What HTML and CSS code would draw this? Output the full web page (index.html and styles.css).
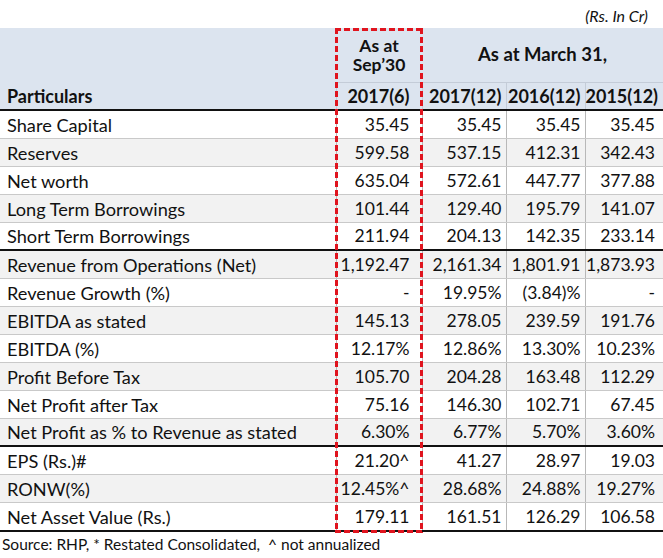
FILE: index.html
```html
<!DOCTYPE html>
<html>
<head>
<meta charset="utf-8">
<link rel="stylesheet" href="styles.css">
</head>
<body>
<div class="page">
  <div class="unit">(Rs. In Cr)</div>
  <div class="tablewrap">
    <table class="fin">
      <colgroup>
        <col class="c1"><col class="c2"><col class="c3"><col class="c4"><col class="c5">
      </colgroup>
      <thead>
        <tr class="h1">
          <th class="part" rowspan="2">Particulars</th>
          <th class="sep"><span class="ln">As at</span><span class="ln">Sep’30</span></th>
          <th class="march" colspan="3">As at March 31,</th>
        </tr>
        <tr class="h2">
          <th class="yr">2017(6)</th>
          <th class="yr">2017(12)</th>
          <th class="yr">2016(12)</th>
          <th class="yr">2015(12)</th>
        </tr>
      </thead>
      <tbody>
        <tr><td>Share Capital</td><td>35.45</td><td>35.45</td><td>35.45</td><td>35.45</td></tr>
        <tr class="alt"><td>Reserves</td><td>599.58</td><td>537.15</td><td>412.31</td><td>342.43</td></tr>
        <tr><td>Net worth</td><td>635.04</td><td>572.61</td><td>447.77</td><td>377.88</td></tr>
        <tr class="alt"><td>Long Term Borrowings</td><td>101.44</td><td>129.40</td><td>195.79</td><td>141.07</td></tr>
        <tr class="grp"><td>Short Term Borrowings</td><td>211.94</td><td>204.13</td><td>142.35</td><td>233.14</td></tr>
        <tr class="alt"><td>Revenue from Operations (Net)</td><td>1,192.47</td><td>2,161.34</td><td>1,801.91</td><td>1,873.93</td></tr>
        <tr><td>Revenue Growth (%)</td><td>-</td><td>19.95%</td><td>(3.84)%</td><td>-</td></tr>
        <tr class="alt"><td>EBITDA as stated</td><td>145.13</td><td>278.05</td><td>239.59</td><td>191.76</td></tr>
        <tr><td>EBITDA (%)</td><td>12.17%</td><td>12.86%</td><td>13.30%</td><td>10.23%</td></tr>
        <tr class="alt"><td>Profit Before Tax</td><td>105.70</td><td>204.28</td><td>163.48</td><td>112.29</td></tr>
        <tr><td>Net Profit after Tax</td><td>75.16</td><td>146.30</td><td>102.71</td><td>67.45</td></tr>
        <tr class="alt grp"><td>Net Profit as % to Revenue as stated</td><td>6.30%</td><td>6.77%</td><td>5.70%</td><td>3.60%</td></tr>
        <tr><td>EPS (Rs.)#</td><td>21.20^</td><td>41.27</td><td>28.97</td><td>19.03</td></tr>
        <tr class="alt"><td>RONW(%)</td><td>12.45%^</td><td>28.68%</td><td>24.88%</td><td>19.27%</td></tr>
        <tr class="last"><td>Net Asset Value (Rs.)</td><td>179.11</td><td>161.51</td><td>126.29</td><td>106.58</td></tr>
      </tbody>
    </table>
    <div class="highlight"></div>
  </div>
  <div class="source">Source: RHP, * Restated Consolidated,&nbsp; ^ not annualized</div>
</div>
</body>
</html>
```

FILE: styles.css
```css
html, body {
  margin: 0;
  padding: 0;
  background: #ffffff;
}

.page {
  width: 663px;
  font-family: "Lato", "Liberation Sans", sans-serif;
  color: #111111;
}

.unit {
  height: 28px;
  box-sizing: border-box;
  padding: 7px 15px 0 0;
  text-align: right;
  font-style: italic;
  font-size: 16px;
  line-height: 18px;
}

.tablewrap {
  position: relative;
}

.fin {
  border-collapse: collapse;
  table-layout: fixed;
  width: 663px;
  font-size: 17.5px;
}

.c1 { width: 336px; }
.c2 { width: 86px; }
.c3 { width: 84px; }
.c4 { width: 79px; }
.c5 { width: 78px; }

.fin th,
.fin td {
  padding: 0;
  white-space: nowrap;
  overflow: visible;
}

.fin thead th {
  background: #dce4ef;
  font-weight: bold;
  font-size: 18px;
  line-height: 20px;
}

.h1 th {
  height: 52px;
}

.h1 .sep {
  text-align: center;
  border-bottom: 1px solid #c4ccd8;
  vertical-align: middle;
  line-height: 17px;
}

.ln {
  display: block;
  height: 19px;
  line-height: 19px;
  font-size: 17.5px;
}

.h1 .march {
  text-align: center;
  vertical-align: middle;
  border-bottom: 1px solid #c4ccd8;
  padding: 0 0 2px 0;
  font-size: 18.5px;
}

.h1 .part {
  text-align: left;
  vertical-align: bottom;
  padding: 0 0 3px 7px;
  border-bottom: 2px solid #111;
}

.h2 th {
  height: 26px;
  border-bottom: 2px solid #111;
}

.h2 .yr {
  text-align: right;
  border-left: 1px solid #c4ccd8;
}

.fin tbody td {
  height: 27px;
  line-height: 20px;
  border-bottom: 1px solid #c9c9c9;
  border-left: 1px solid #b8b8b8;
  text-align: right;
  vertical-align: middle;
}

.fin tbody td:first-child {
  text-align: left;
  padding-left: 7px;
  border-left: none;
  font-size: 18.2px;
}

.h2 .yr:nth-child(1),
.fin tbody td:nth-child(2) { padding-right: 12px; }

.h2 .yr:nth-child(2),
.fin tbody td:nth-child(3) { padding-right: 4px; }

.h2 .yr:nth-child(3),
.fin tbody td:nth-child(4) { padding-right: 4px; }

.h2 .yr:nth-child(4),
.fin tbody td:nth-child(5) { padding-right: 8px; }

.fin tbody tr.alt td {
  background: #f2f2f2;
}

.fin tbody tr.grp td {
  height: 26px;
  border-bottom: 2px solid #111;
}

.fin tbody tr.last td {
  border-bottom: 2px solid #111;
}

.highlight {
  position: absolute;
  top: 0;
  bottom: -1px;
  left: 335px;
  width: 88px;
  pointer-events: none;
  background:
    repeating-linear-gradient(90deg, #e0141e 0 6px, transparent 6px 9px) left top / 100% 3px no-repeat,
    repeating-linear-gradient(90deg, #e0141e 0 6px, transparent 6px 9px) left bottom / 100% 3px no-repeat,
    repeating-linear-gradient(180deg, #e0141e 0 6px, transparent 6px 9px) left top / 3px 100% no-repeat,
    repeating-linear-gradient(180deg, #e0141e 0 6px, transparent 6px 9px) right top / 3px 100% no-repeat;
}

.source {
  padding: 3px 0 0 2px;
  font-size: 15.5px;
  line-height: 18px;
}
```
